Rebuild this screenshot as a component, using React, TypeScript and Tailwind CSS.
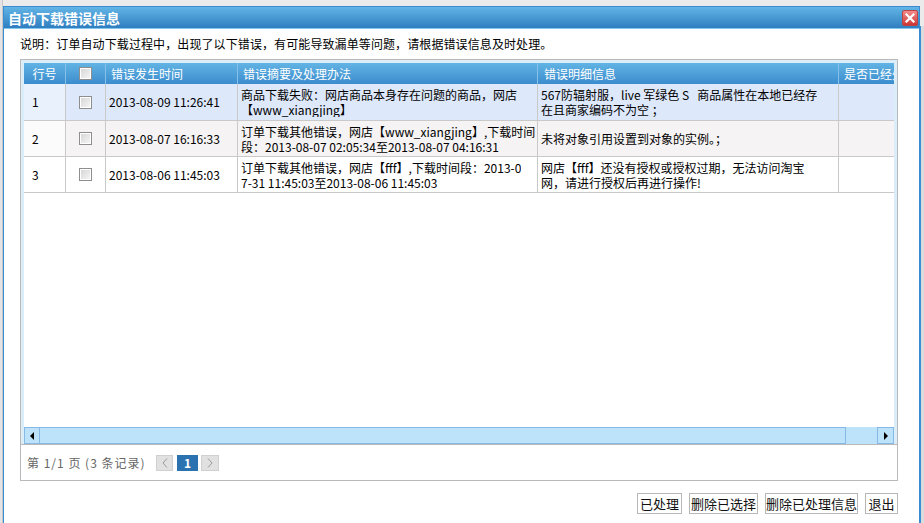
import React from "react";

type Row = {
  num: string;
  time: string;
  summary: string[];
  detail: string[];
  bg: string;
  numBg: string;
  h: string;
};

const rows: Row[] = [
  {
    num: "1",
    time: "2013-08-09 11:26:41",
    summary: ["商品下载失败：网店商品本身存在问题的商品，网店", "【www_xiangjing】"],
    detail: ["567防辐射服，live 军绿色 S\u00a0\u00a0\u00a0商品属性在本地已经存", "在且商家编码不为空 ；"],
    bg: "bg-[#dde8fb]",
    numBg: "bg-[#e9f1fd]",
    h: "h-[37px]",
  },
  {
    num: "2",
    time: "2013-08-07 16:16:33",
    summary: ["订单下载其他错误，网店【www_xiangjing】,下载时间", "段：2013-08-07 02:05:34至2013-08-07 04:16:31"],
    detail: ["未将对象引用设置到对象的实例。；"],
    bg: "bg-[#f5f3f3]",
    numBg: "bg-[#fbfbfb]",
    h: "h-[36px]",
  },
  {
    num: "3",
    time: "2013-08-06 11:45:03",
    summary: ["订单下载其他错误，网店【fff】,下载时间段：2013-0", "7-31 11:45:03至2013-08-06 11:45:03"],
    detail: ["网店【fff】还没有授权或授权过期，无法访问淘宝", "网，请进行授权后再进行操作!"],
    bg: "bg-white",
    numBg: "bg-white",
    h: "h-[36px]",
  },
];

const buttons = [
  { label: "已处理", w: "w-[45px]" },
  { label: "删除已选择", w: "w-[69px]" },
  { label: "删除已处理信息", w: "w-[93px]" },
  { label: "退出", w: "w-[33px]" },
];

function Checkbox() {
  return (
    <span className="block w-[13px] h-[13px] border border-[#8e8e8e] bg-gradient-to-br from-[#d4d4d4] to-[#f7f7f7] shadow-[inset_0_0_0_1px_#ffffff]" />
  );
}

function Lines({ lines }: { lines: string[] }) {
  return (
    <div className="leading-[15px] whitespace-nowrap overflow-hidden">
      {lines.map((l, i) => (
        <div key={i}>{l}</div>
      ))}
    </div>
  );
}

export default function App() {
  const cell = "shrink-0 border-r border-b border-[#c9c9c9] flex items-center overflow-hidden";
  const head = "shrink-0 h-full border-r border-[#84c0ea] flex items-center overflow-hidden";

  return (
    <div className="relative w-[924px] h-[523px] overflow-hidden bg-[#ebebeb] font-['Noto_Sans_CJK_SC',sans-serif] text-black">
      {/* page behind the dialog */}
      <div className="absolute left-0 top-0 h-full w-[3px] border-r border-[#c8c8c8] bg-[#e4e4e4]" />
      <div className="absolute right-0 top-[26px] h-full w-[4px] border-l border-[#3c8fd6] bg-[#dcdcdc]" />

      {/* dialog */}
      <div className="absolute left-[3px] top-[6px] w-[917px] h-[520px] border border-[#3a8ad2] bg-white flex flex-col">
        <div className="h-[22px] shrink-0 bg-gradient-to-b from-[#62b5e6] to-[#2f7ec0] border-b border-[#86c6ef] flex items-center justify-between pl-[4px] pr-[1px]">
          <span className="text-white text-[14px] font-bold leading-none">自动下载错误信息</span>
          <span className="w-[16px] h-[16px] border border-[#b94545] rounded-[2px] bg-gradient-to-b from-[#f28a8a] to-[#cc3434] flex items-center justify-center">
            <svg width="10" height="10" viewBox="0 0 10 10">
              <path d="M1.5 1.5 L8.5 8.5 M8.5 1.5 L1.5 8.5" stroke="white" strokeWidth="2.2" strokeLinecap="square" />
            </svg>
          </span>
        </div>

        <div className="flex-1 flex flex-col pl-[16px] pr-[21px]">
          <div className="h-[30px] flex items-center text-[12px] tracking-[0.1px] whitespace-nowrap">
            说明：订单自动下载过程中，出现了以下错误，有可能导致漏单等问题，请根据错误信息及时处理。
          </div>

          {/* grid */}
          <div className="h-[422px] border border-[#b9b9b9] flex flex-col">
            <div className="flex-1 bg-[#dcedfa] px-[3px] pt-[3px] flex flex-col border-b border-[#b9b9b9]">
              <div className="flex-1 bg-white overflow-hidden">
                <div className="w-[915px] text-[12px]">
                  <div className="h-[21px] flex bg-gradient-to-b from-[#62b4e4] to-[#3b8ccd] text-white text-[12px]">
                    <div className={`${head} w-[42px] justify-center`}>行号</div>
                    <div className={`${head} w-[40px] justify-center`}>
                      <Checkbox />
                    </div>
                    <div className={`${head} w-[132px] pl-[5px]`}>错误发生时间</div>
                    <div className={`${head} w-[300px] pl-[5px]`}>错误摘要及处理办法</div>
                    <div className={`${head} w-[301px] pl-[6px]`}>错误明细信息</div>
                    <div className={`${head} w-[100px] pl-[5px] whitespace-nowrap`}>是否已经处理</div>
                  </div>
                  {rows.map((r) => (
                    <div key={r.num} className={`flex ${r.h} ${r.bg}`}>
                      <div className={`${cell} w-[42px] pl-[8px] ${r.numBg}`}>{r.num}</div>
                      <div className={`${cell} w-[40px] justify-center`}>
                        <Checkbox />
                      </div>
                      <div className={`${cell} w-[132px] pl-[3px] whitespace-nowrap`}>{r.time}</div>
                      <div className={`${cell} w-[300px] pl-[3px]`}>
                        <Lines lines={r.summary} />
                      </div>
                      <div className={`${cell} w-[301px] pl-[3px]`}>
                        <Lines lines={r.detail} />
                      </div>
                      <div className={`${cell} w-[100px]`} />
                    </div>
                  ))}
                </div>
              </div>

              {/* horizontal scrollbar */}
              <div className="h-[17px] shrink-0 bg-[#bde3fb] flex items-stretch">
                <div className="w-[16px] border border-[#86b8e8] flex items-center justify-center">
                  <svg width="5" height="8" viewBox="0 0 5 8">
                    <path d="M4 0 L0 4 L4 8 Z" fill="#000" />
                  </svg>
                </div>
                <div className="w-[806px] border border-[#86b8e8] border-l-0" />
                <div className="flex-1" />
                <div className="w-[17px] border border-[#86b8e8] flex items-center justify-center">
                  <svg width="5" height="8" viewBox="0 0 5 8">
                    <path d="M1 0 L5 4 L1 8 Z" fill="#000" />
                  </svg>
                </div>
              </div>
            </div>

            {/* pagination */}
            <div className="h-[35px] shrink-0 flex items-center pl-[6px] text-[12px] text-[#666]">
              <span className="w-[129px] tracking-[1px] whitespace-nowrap">第 1/1 页 (3 条记录)</span>
              <span className="w-[17px] h-[16px] bg-[#e1e1e1] border border-[#d0d0d0] flex items-center justify-center">
                <svg width="6" height="10" viewBox="0 0 6 10">
                  <path d="M5 0.5 L1 5 L5 9.5" stroke="#9a9a9a" fill="none" />
                </svg>
              </span>
              <span className="ml-[4px] w-[21px] h-[16px] bg-[#2a72b0] text-white font-bold text-[12px] flex items-center justify-center leading-none">
                1
              </span>
              <span className="ml-[3px] w-[18px] h-[16px] bg-[#e1e1e1] border border-[#d0d0d0] flex items-center justify-center">
                <svg width="6" height="10" viewBox="0 0 6 10">
                  <path d="M1 0.5 L5 5 L1 9.5" stroke="#9a9a9a" fill="none" />
                </svg>
              </span>
            </div>
          </div>

          {/* action buttons */}
          <div className="mt-[12px] flex justify-end gap-[7px] text-[13px] text-black">
            {buttons.map((b) => (
              <div
                key={b.label}
                role="button"
                className={`${b.w} h-[21px] border border-[#b7b7b7] bg-white text-[#111] leading-none whitespace-nowrap flex items-center justify-center cursor-default`}
              >
                <span className="text-[#111]">{b.label}</span>
              </div>
            ))}
          </div>
        </div>
      </div>
    </div>
  );
}
